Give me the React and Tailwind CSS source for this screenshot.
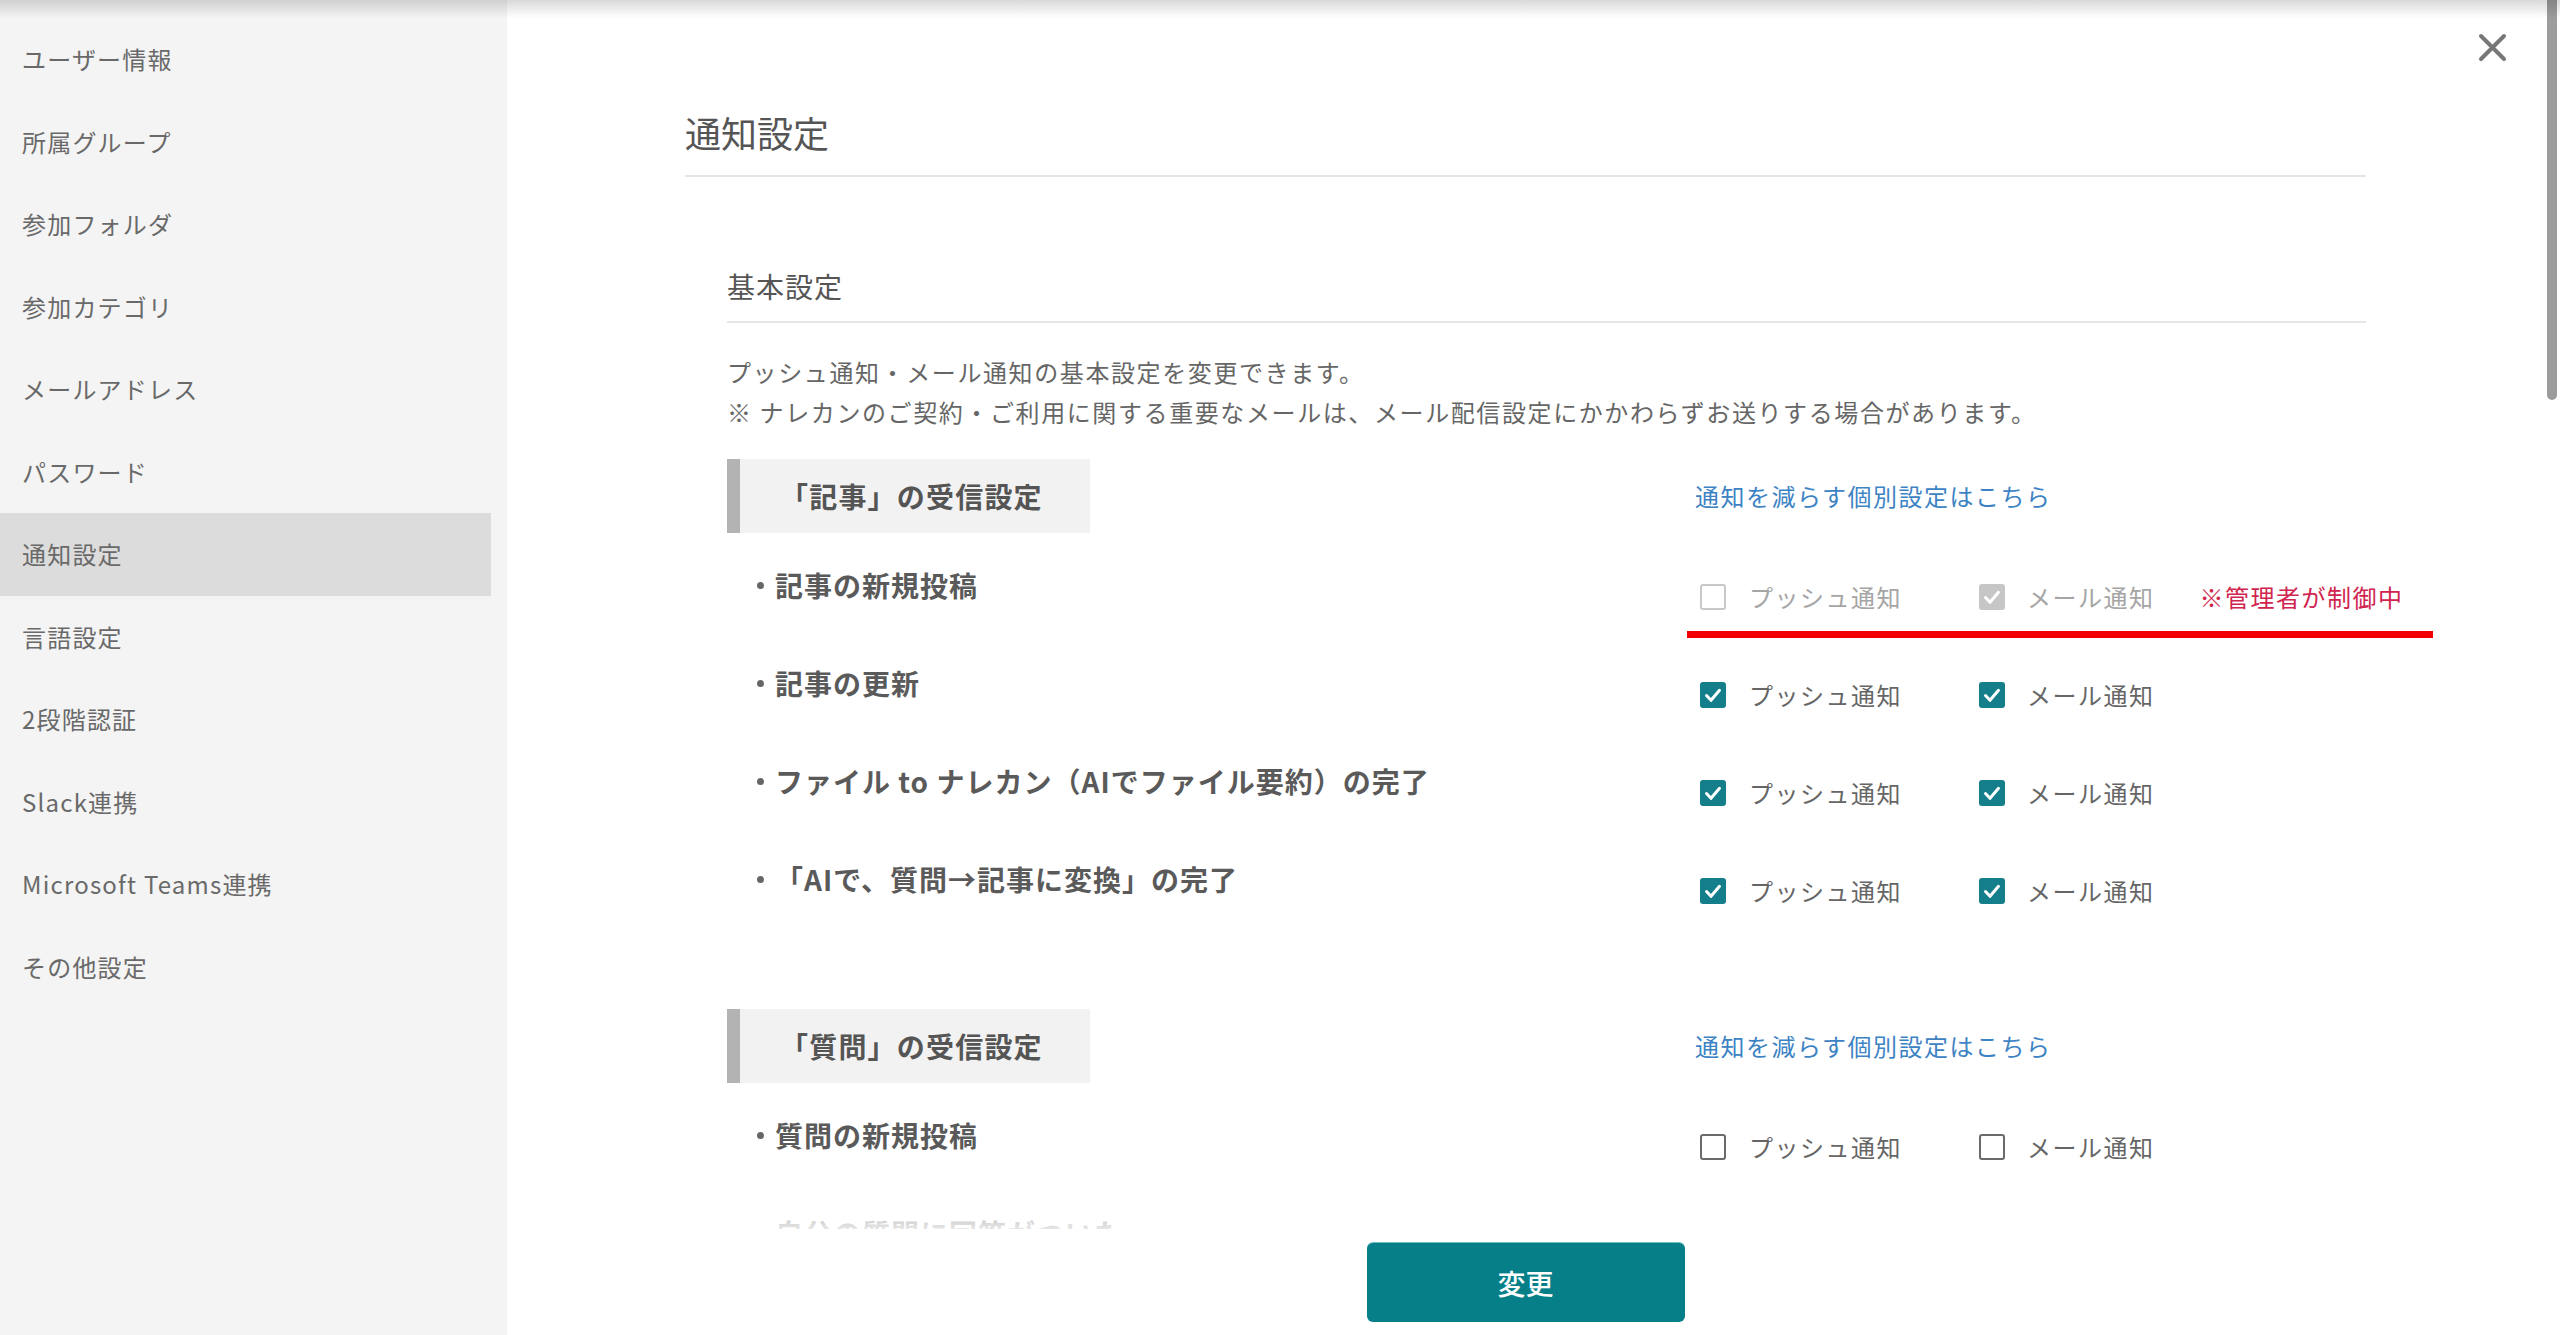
import React from "react";

const menu = [
  "ユーザー情報",
  "所属グループ",
  "参加フォルダ",
  "参加カテゴリ",
  "メールアドレス",
  "パスワード",
  "通知設定",
  "言語設定",
  "2段階認証",
  "Slack連携",
  "Microsoft Teams連携",
  "その他設定",
];

const articleRows = [
  { label: "記事の新規投稿", push: "off-disabled", mail: "on-disabled", locked: true },
  { label: "記事の更新", push: "on", mail: "on" },
  { label: "ファイル to ナレカン（AIでファイル要約）の完了", push: "on", mail: "on" },
  { label: "「AIで、質問→記事に変換」の完了", push: "on", mail: "on" },
];

const questionRows = [
  { label: "質問の新規投稿", push: "off", mail: "off" },
  { label: "自分の質問に回答がついた", push: "off", mail: "off" },
  { label: "自分の回答にコメントがついた", push: "off", mail: "off" },
];

function Checkbox({ state }) {
  if (state === "on" || state === "on-disabled") {
    const bg = state === "on" ? "bg-[#147f8a]" : "bg-[#c6c6c6]";
    return (
      <span className={`flex h-[26px] w-[26px] shrink-0 items-center justify-center rounded-[3px] ${bg}`}>
        <svg width="26" height="26" viewBox="0 0 26 26" fill="none">
          <path d="M6.5 13.5l4.5 4.8 8.5-10" stroke="#fff" strokeWidth="3" strokeLinecap="round" strokeLinejoin="round" />
        </svg>
      </span>
    );
  }
  const border = state === "off" ? "border-[#6a6a6a]" : "border-[#c8c8c8]";
  return <span className={`h-[26px] w-[26px] shrink-0 rounded-[3px] border-2 bg-white ${border}`} />;
}

function SectionHeader({ title }) {
  return (
    <div className="flex items-center">
      <div className="flex h-[74px] w-[363px] shrink-0 items-center border-l-[13px] border-[#b3b3b3] bg-[#f2f2f2] pl-[40px]">
        <span className="whitespace-nowrap text-[28px] font-bold tracking-[1.2px] text-[#555]">{title}</span>
      </div>
      <a className="ml-[605px] whitespace-nowrap text-[24px] tracking-[1.5px] text-[#3d83c4]">通知を減らす個別設定はこちら</a>
    </div>
  );
}

function Row({ row }) {
  const labelColor = row.locked ? "text-[#a5a5a5]" : "text-[#666]";
  return (
    <div className="relative flex h-[98px]">
      <div className="flex w-[968px] shrink-0 items-start pl-[30px] pt-[17px]">
        <span className="mr-[11px] mt-[17px] h-[7px] w-[7px] shrink-0 rounded-full bg-[#666]" />
        <span className="whitespace-nowrap text-[28px] font-bold leading-[40px] tracking-[1px] text-[#5a5a5a]">
          {row.label}
        </span>
      </div>
      <div className="flex shrink-0 items-start whitespace-nowrap pt-[36px]">
        <label className="flex h-[26px] w-[284px] items-center pl-[5px]">
          <Checkbox state={row.push} />
          <span className={`ml-[23px] text-[24px] tracking-[1.5px] ${labelColor}`}>プッシュ通知</span>
        </label>
        <label className="flex h-[26px] items-center">
          <Checkbox state={row.mail} />
          <span className={`ml-[22px] text-[24px] tracking-[1.5px] ${labelColor}`}>メール通知</span>
        </label>
        {row.locked && (
          <span className="ml-[45px] flex h-[26px] items-center text-[24px] tracking-[1.5px] text-[#d0254f]">
            ※管理者が制御中
          </span>
        )}
      </div>
      {row.locked && <div className="absolute left-[960px] top-[83px] h-[7px] w-[746px] bg-[#f20000]" />}
    </div>
  );
}

export default function App() {
  return (
    <div className="relative flex h-[1335px] w-[2560px] overflow-hidden bg-white font-['Noto_Sans_CJK_JP','Noto_Sans',sans-serif]">
      <div className="pointer-events-none absolute inset-x-0 top-0 z-20 h-[18px] bg-linear-to-b from-black/15 to-transparent" />

      <aside className="w-[507px] shrink-0 bg-[#f4f4f4] pt-[18px]">
        <nav className="flex w-[491px] flex-col">
          {menu.map((item) => (
            <div
              key={item}
              className={`flex h-[82.5px] items-center pl-[22px] text-[24px] tracking-[1.2px] text-[#696969] ${
                item === "通知設定" ? "bg-[#dcdcdc]" : ""
              }`}
            >
              {item}
            </div>
          ))}
        </nav>
      </aside>

      <main className="relative flex min-w-0 flex-1 flex-col">
        <button className="absolute right-[53px] top-[33px] z-10 h-[29px] w-[29px]">
          <svg width="29" height="29" viewBox="0 0 29 29" fill="none">
            <path d="M3 3l23 23M26 3L3 26" stroke="#777" strokeWidth="4" strokeLinecap="round" />
          </svg>
        </button>
        <div className="absolute right-[3px] top-0 z-10 h-[400px] w-[10px] rounded-b-full bg-[#9c9c9c]" />

        <div className="relative min-h-0 flex-1 overflow-hidden pl-[178px] pr-[194px]">
          <div className="border-b-2 border-[#e6e6e6] pb-[19px] pt-[108px]">
            <h1 className="text-[36px] leading-[48px] text-[#555]">通知設定</h1>
          </div>

          <div className="pl-[42px]">
            <div className="mt-[89px] border-b-2 border-[#e6e6e6] pb-[15px]">
              <h2 className="text-[28px] leading-[40px] tracking-[1px] text-[#555]">基本設定</h2>
            </div>
            <div className="mt-[29px] whitespace-nowrap text-[24px] leading-[40px] tracking-[1.6px] text-[#666]">
              <p>プッシュ通知・メール通知の基本設定を変更できます。</p>
              <p>※ ナレカンのご契約・ご利用に関する重要なメールは、メール配信設定にかかわらずお送りする場合があります。</p>
            </div>

            <div className="mt-[27px]">
              <SectionHeader title="「記事」の受信設定" />
              <div className="mt-[15px]">
                {articleRows.map((row) => (
                  <Row key={row.label} row={row} />
                ))}
              </div>
            </div>

            <div className="mt-[69px]">
              <SectionHeader title="「質問」の受信設定" />
              <div className="mt-[15px]">
                {questionRows.map((row) => (
                  <Row key={row.label} row={row} />
                ))}
              </div>
            </div>
          </div>

          <div className="pointer-events-none absolute inset-x-0 bottom-0 h-[60px] bg-linear-to-b from-white/0 to-white/85" />
        </div>

        <footer className="flex h-[106px] shrink-0 justify-center bg-white pl-[178px] pr-[194px] pt-[14px]">
          <button className="h-[79px] w-[318px] rounded-[6px] bg-[#067f89] text-[28px] font-medium text-white shadow-[0_-1px_0_#6fc0c6]">
            変更
          </button>
        </footer>
      </main>
    </div>
  );
}
